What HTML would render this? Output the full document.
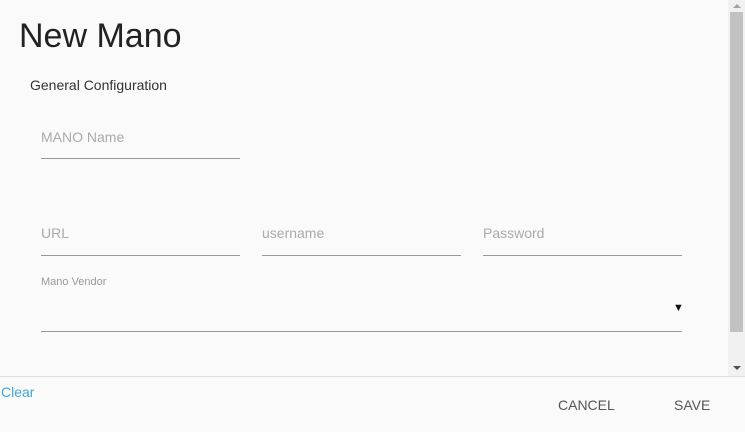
<!DOCTYPE html>
<html><head><style>
*{margin:0;padding:0;box-sizing:border-box}
body{width:745px;height:432px;background:#fafafa;font-family:"Liberation Sans",sans-serif;position:relative;overflow:hidden}
.a{position:absolute}
.lbl{color:#aaa;font-size:14px}
.line{height:1px;background:#999}
</style></head><body>
<div class="a" style="left:19px;top:17px;font-size:34px;color:#222">New Mano</div>
<div class="a" style="left:30px;top:77px;font-size:14px;color:#333">General Configuration</div>
<div class="a lbl" style="left:41px;top:129px">MANO Name</div>
<div class="a line" style="left:41px;top:158px;width:199px"></div>
<div class="a lbl" style="left:41px;top:225px">URL</div>
<div class="a line" style="left:41px;top:255px;width:199px"></div>
<div class="a lbl" style="left:262px;top:225px">username</div>
<div class="a line" style="left:262px;top:255px;width:199px"></div>
<div class="a lbl" style="left:483px;top:225px">Password</div>
<div class="a line" style="left:483px;top:255px;width:199px"></div>
<div class="a" style="left:41px;top:276px;font-size:11px;color:#999">Mano Vendor</div>
<div class="a" style="left:673px;top:302px;font-size:11px;color:#111">▼</div>
<div class="a line" style="left:41px;top:331px;width:641px"></div>
<div class="a" style="left:728px;top:0;width:17px;height:376px;background:#f1f1f1"></div>
<div class="a" style="left:730px;top:12px;width:13px;height:320px;background:#c1c1c1"></div>
<div class="a" style="left:733px;top:4px;width:0;height:0;border-left:4px solid transparent;border-right:4px solid transparent;border-bottom:4px solid #a3a3a3"></div>
<div class="a" style="left:733px;top:366px;width:0;height:0;border-left:4px solid transparent;border-right:4px solid transparent;border-top:4px solid #505050"></div>
<div class="a" style="left:0;top:376px;width:745px;height:1px;background:#e0e0e0"></div>
<div class="a" style="left:1px;top:384px;font-size:14px;color:#3ea6d8">Clear</div>
<div class="a" style="left:558px;top:397px;font-size:14px;color:#555">CANCEL</div>
<div class="a" style="left:674px;top:397px;font-size:14px;color:#555">SAVE</div>
</body></html>
